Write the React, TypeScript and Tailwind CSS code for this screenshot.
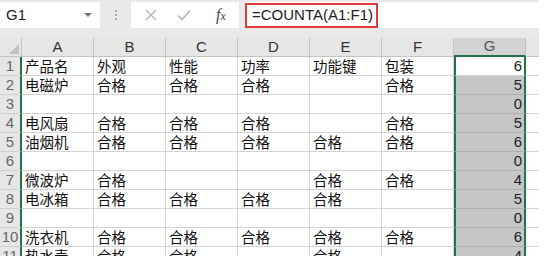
import React from "react"

const cols = ["A", "B", "C", "D", "E", "F", "G"]

const rows: string[][] = [
  ["产品名", "外观", "性能", "功率", "功能键", "包装", "6"],
  ["电磁炉", "合格", "合格", "合格", "", "合格", "5"],
  ["", "", "", "", "", "", "0"],
  ["电风扇", "合格", "合格", "合格", "", "合格", "5"],
  ["油烟机", "合格", "合格", "合格", "合格", "合格", "6"],
  ["", "", "", "", "", "", "0"],
  ["微波炉", "合格", "", "", "合格", "合格", "4"],
  ["电冰箱", "合格", "合格", "合格", "合格", "", "5"],
  ["", "", "", "", "", "", "0"],
  ["洗衣机", "合格", "合格", "合格", "合格", "合格", "6"],
  ["热水壶", "合格", "合格", "", "合格", "", "4"],
]

const cjk = "font-['Noto_Sans_CJK_SC','Noto_Sans',sans-serif]"
const latin = "font-['Liberation_Sans','Noto_Sans_CJK_SC',sans-serif]"

function FormulaBar() {
  return (
    <div className="flex h-[38px] items-start bg-[#e9e9e9] pt-[2px]">
      <div className="flex h-[26px] w-[100px] items-center justify-between bg-white pl-[6px] pr-[8px]">
        <span className={`${latin} text-[15px] text-[#222]`}>G1</span>
        <span className="h-0 w-0 border-x-[4px] border-t-[4px] border-x-transparent border-t-[#777]" />
      </div>
      <div className="flex h-[26px] w-[31px] flex-col items-center justify-center gap-[2px]">
        <span className="h-[2px] w-[2px] bg-[#aaa]" />
        <span className="h-[2px] w-[2px] bg-[#aaa]" />
        <span className="h-[2px] w-[2px] bg-[#aaa]" />
      </div>
      <div className="flex h-[26px] w-[108px] items-center bg-white">
        <svg width="12" height="12" viewBox="0 0 12 12" className="ml-[14px]">
          <path d="M1 1 L11 11 M11 1 L1 11" stroke="#b5b5b5" strokeWidth="1.4" fill="none" />
        </svg>
        <svg width="14" height="12" viewBox="0 0 14 12" className="ml-[20px]">
          <path d="M1 6.5 L5 10.5 L13 1.5" stroke="#b5b5b5" strokeWidth="1.6" fill="none" />
        </svg>
        <span className="ml-[25px] font-['Liberation_Serif',serif] text-[16px] italic text-[#444]">
          f<span className="text-[12px]">x</span>
        </span>
      </div>
      <div className="ml-[6px] flex h-[26px] flex-1 items-center bg-white">
        <div className="flex h-[25px] w-[133px] items-center border-2 border-[#e23b3b] pl-[5px]">
          <span className={`${latin} text-[15px] text-[#222]`}>=COUNTA(A1:F1)</span>
        </div>
      </div>
    </div>
  )
}

function HeaderRow() {
  return (
    <div className="flex h-[19px]">
      <div className="relative w-[22px] border-r border-b border-[#c4c4c4] bg-[#e6e6e6]">
        <span className="absolute right-[2px] bottom-[2px] h-0 w-0 border-l-[10px] border-t-[10px] border-l-transparent border-t-transparent border-b-0 border-r-[10px] border-r-[#c2c2c2]" />
      </div>
      {cols.map((c) => (
        <div
          key={c}
          className={`flex w-[72px] items-center justify-center border-r border-[#c4c4c4] ${latin} text-[15px] ${
            c === "G"
              ? "border-b-2 border-b-[#217346] bg-[#d3d3d3] text-[#555]"
              : "border-b bg-[#e6e6e6] text-[#333]"
          }`}
        >
          {c}
        </div>
      ))}
      <div className="w-[13px] border-b border-[#c4c4c4] bg-[#e6e6e6]" />
    </div>
  )
}

function DataRow({ n, cells }: { n: number; cells: string[] }) {
  return (
    <div className="flex h-[19px]">
      <div
        className={`flex w-[22px] items-center justify-center border-b border-r-2 border-b-[#d0d0d0] border-r-[#217346] bg-[#e6e6e6] ${latin} text-[15px] text-[#666]`}
      >
        {n}
      </div>
      {cells.map((v, i) =>
        i === 6 ? (
          <div
            key={i}
            className={`flex w-[72px] items-end justify-end border-x-2 border-x-[#217346] pr-[2px] ${latin} text-[15px] leading-[18px] text-[#222] ${
              n === 1 ? "bg-white border-b border-b-[#d0d0d0]" : "bg-[#c6c6c6] border-b border-b-[#b0b0b0]"
            }`}
          >
            {v}
          </div>
        ) : (
          <div
            key={i}
            className={`flex w-[72px] items-center border-b border-r border-[#d4d4d4] pl-[3px] ${cjk} text-[14.5px] leading-[18px] text-[#111]`}
          >
            {v}
          </div>
        )
      )}
      <div className="w-[13px] border-b border-[#d4d4d4]" />
    </div>
  )
}

export default function App() {
  return (
    <div className="h-[256px] w-[553px] overflow-hidden bg-white">
      <div className="w-[539px]">
        <FormulaBar />
        <HeaderRow />
        {rows.map((r, i) => (
          <DataRow key={i} n={i + 1} cells={r} />
        ))}
      </div>
    </div>
  )
}
